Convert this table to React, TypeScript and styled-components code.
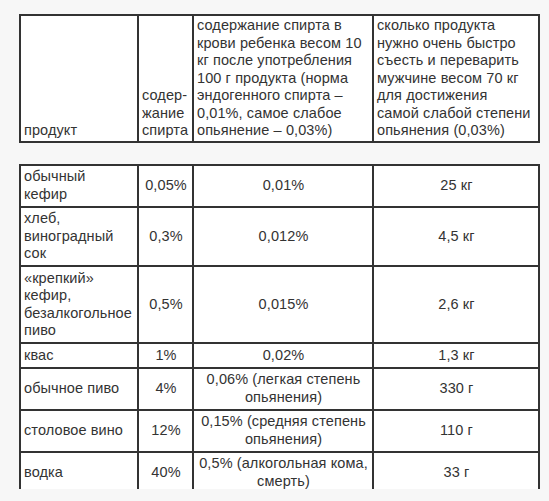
import React from "react";
import styled, { createGlobalStyle } from "styled-components";

const GlobalStyle = createGlobalStyle`
  html, body {
    margin: 0;
    padding: 0;
    background: #f7f7f7;
  }
`;

type Row = {
  product: React.ReactNode;
  content: string;
  blood: React.ReactNode;
  amount: string;
};

const rows: Row[] = [
  { product: <>обычный<br />кефир</>, content: "0,05%", blood: "0,01%", amount: "25 кг" },
  { product: <>хлеб,<br />виноградный<br />сок</>, content: "0,3%", blood: "0,012%", amount: "4,5 кг" },
  {
    product: <>«крепкий»<br />кефир,<br />безалкогольное<br />пиво</>,
    content: "0,5%",
    blood: "0,015%",
    amount: "2,6 кг",
  },
  { product: "квас", content: "1%", blood: "0,02%", amount: "1,3 кг" },
  {
    product: "обычное пиво",
    content: "4%",
    blood: <>0,06% (легкая степень<br />опьянения)</>,
    amount: "330 г",
  },
  {
    product: "столовое вино",
    content: "12%",
    blood: <>0,15% (средняя степень<br />опьянения)</>,
    amount: "110 г",
  },
  {
    product: "водка",
    content: "40%",
    blood: <>0,5% (алкогольная кома,<br />смерть)</>,
    amount: "33 г",
  },
];

const Columns = () => (
  <colgroup>
    <col style={{ width: 118 }} />
    <col style={{ width: 55 }} />
    <col style={{ width: 180 }} />
    <col style={{ width: 166 }} />
  </colgroup>
);

const App = () => {
  return (
    <Page>
      <GlobalStyle />
      <Table>
        <Columns />
        <tbody>
          <tr>
            <HeadCell>продукт</HeadCell>
            <HeadCell>
              содер-
              <br />
              жание
              <br />
              спирта
            </HeadCell>
            <HeadCell>
              содержание спирта в<br />
              крови ребенка весом 10<br />
              кг после употребления<br />
              100 г продукта (норма<br />
              эндогенного спирта –<br />
              0,01%, самое слабое<br />
              опьянение – 0,03%)
            </HeadCell>
            <HeadCell>
              сколько продукта
              <br />
              нужно очень быстро
              <br />
              съесть и переварить
              <br />
              мужчине весом 70 кг
              <br />
              для достижения
              <br />
              самой слабой степени
              <br />
              опьянения (0,03%)
            </HeadCell>
          </tr>
        </tbody>
      </Table>

      <Clip>
        <Table>
          <Columns />
          <tbody>
            {rows.map((row, i) => (
              <tr key={i}>
                <Cell>{row.product}</Cell>
                <Cell $center>{row.content}</Cell>
                <Cell $center>{row.blood}</Cell>
                <Cell $center>{row.amount}</Cell>
              </tr>
            ))}
          </tbody>
        </Table>
      </Clip>
    </Page>
  );
};

const Page = styled.div`
  height: 501px;
  overflow: hidden;
  padding: 14px 0 0 19px;
  box-sizing: border-box;
  font-family: "Liberation Sans", Arial, sans-serif;
  font-size: 14.5px;
  letter-spacing: 0.1px;
  line-height: 17.5px;
  color: #333333;
`;

const Table = styled.table`
  border-collapse: collapse;
  table-layout: fixed;
  width: 520px;
  background: #ffffff;
`;

const HeadCell = styled.td`
  border: 2px solid #333333;
  padding: 1px 2px 1px 3px;
  vertical-align: bottom;
  text-align: left;
  white-space: nowrap;
`;

const Cell = styled.td<{ $center?: boolean }>`
  border: 2px solid #333333;
  padding: 2.5px 2px 2.5px 3px;
  vertical-align: middle;
  white-space: nowrap;
  text-align: ${(p) => (p.$center ? "center" : "left")};
`;

const Clip = styled.div`
  margin-top: 21px;
  height: 325px;
  overflow: hidden;
`;

export default App;
